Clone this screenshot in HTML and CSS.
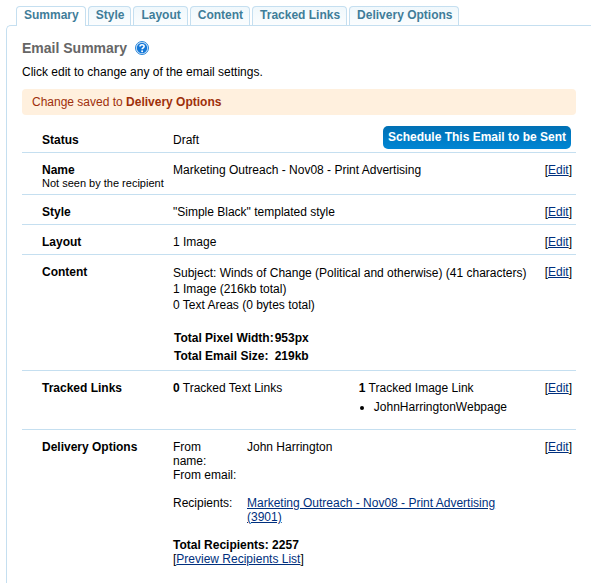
FILE: index.html
```html
<!DOCTYPE html>
<html lang="en">
<head>
    <meta charset="UTF-8">
    <meta name="viewport" content="width=device-width, initial-scale=1.0">
    <title>Email Summary</title>
    <link rel="stylesheet" href="styles.css">
</head>
<body>
    <nav class="tabs">
        <a href="#" class="tab active">Summary</a>
        <a href="#" class="tab">Style</a>
        <a href="#" class="tab">Layout</a>
        <a href="#" class="tab">Content</a>
        <a href="#" class="tab">Tracked Links</a>
        <a href="#" class="tab">Delivery Options</a>
    </nav>
    <div class="panel">
        <div class="title">
            <h1>Email Summary</h1>
            <a href="#" class="help" aria-label="Help">
                <svg width="14" height="14" viewBox="0 0 14 14">
                    <circle cx="7" cy="7" r="6.5" fill="#d5e8fa" stroke="#2a86d8" stroke-width="1"/>
                    <circle cx="7" cy="7" r="5.2" fill="#1478d8"/>
                    <path d="M5 5.6C5 3.2 9.1 3.2 9.1 5.5C9.1 6.9 7.1 6.8 7.1 8.3" fill="none" stroke="#fff" stroke-width="1.6"/>
                    <circle cx="7.1" cy="10.2" r="1" fill="#fff"/>
                </svg>
            </a>
        </div>
        <p class="intro">Click edit to change any of the email settings.</p>
        <div class="message">Change saved to <b>Delivery Options</b></div>

        <table class="summary">
            <tr class="status">
                <th scope="row">Status</th>
                <td>Draft</td>
                <td class="action"><button type="button" class="schedule-btn">Schedule This Email to be Sent</button></td>
            </tr>
        </table>
        <table class="summary">
            <tr>
                <th scope="row">Name<span class="note">Not seen by the recipient</span></th>
                <td>Marketing Outreach - Nov08 - Print Advertising</td>
                <td class="edit">[<a href="#">Edit</a>]</td>
            </tr>
            <tr>
                <th scope="row">Style</th>
                <td>"Simple Black" templated style</td>
                <td class="edit">[<a href="#">Edit</a>]</td>
            </tr>
            <tr>
                <th scope="row">Layout</th>
                <td>1 Image</td>
                <td class="edit">[<a href="#">Edit</a>]</td>
            </tr>
            <tr>
                <th scope="row">Content</th>
                <td>
                    <div class="details">
                        Subject: Winds of Change (Political and otherwise) (41 characters)<br>
                        1 Image (216kb total)<br>
                        0 Text Areas (0 bytes total)
                    </div>
                    <dl class="totals">
                        <dt>Total Pixel Width:</dt>
                        <dd>953px</dd>
                        <dt>Total Email Size:</dt>
                        <dd>219kb</dd>
                    </dl>
                </td>
                <td class="edit">[<a href="#">Edit</a>]</td>
            </tr>
            <tr class="tracked">
                <th scope="row">Tracked Links</th>
                <td>
                    <div class="links">
                        <div><b>0</b> Tracked Text Links</div>
                        <div>
                            <b>1</b> Tracked Image Link
                            <ul>
                                <li>JohnHarringtonWebpage</li>
                            </ul>
                        </div>
                    </div>
                </td>
                <td class="edit">[<a href="#">Edit</a>]</td>
            </tr>
            <tr class="last">
                <th scope="row">Delivery Options</th>
                <td>
                    <dl class="delivery">
                        <dt>From name:</dt>
                        <dd>John Harrington</dd>
                        <dt>From email:</dt>
                        <dd></dd>
                    </dl>
                    <dl class="delivery">
                        <dt>Recipients:</dt>
                        <dd><a href="#">Marketing Outreach - Nov08 - Print Advertising (3901)</a></dd>
                    </dl>
                    <b>Total Recipients: 2257</b><br>
                    [<a href="#">Preview Recipients List</a>]
                </td>
                <td class="edit">[<a href="#">Edit</a>]</td>
            </tr>
        </table>
    </div>
</body>
</html>
```

FILE: styles.css
```css
* {
    box-sizing: border-box;
}

body {
    font-family: "Liberation Sans", Arial, sans-serif;
    font-size: 12px;
    line-height: 14px;
    margin: 0;
    padding: 6px 0 0 6px;
    display: flex;
    flex-direction: column;
    min-height: 100vh;
    background-color: #fff;
    color: #000;
}

a {
    color: #002f7d;
}

/* Tabs */
.tabs {
    display: flex;
    gap: 2px;
    padding-left: 10px;
}

.tab {
    height: 19px;
    padding: 1px 6px 2px 7px;
    border: 1px solid #c5dff0;
    border-bottom: none;
    border-radius: 4px 4px 0 0;
    background: linear-gradient(to bottom, #f0f8fc, #fbfdfe);
    color: #3f7d99;
    font-weight: bold;
    text-decoration: none;
    white-space: nowrap;
}

.tab.active {
    height: 20px;
    margin-bottom: -1px;
    background: #fff;
    z-index: 1;
}

.panel {
    flex: 1;
    padding: 14px 15px 10px;
    border-top: 1px solid #c5dff0;
    border-left: 1px solid #c5dff0;
    border-top-left-radius: 5px;
}

.title {
    display: flex;
    align-items: center;
    gap: 8px;
    height: 16px;
}

.title h1 {
    margin: 0;
    font-size: 14px;
    color: #666;
}

.help {
    display: flex;
}

.intro {
    margin: 9px 0 10px;
}

.message {
    padding: 6px 10px;
    border-radius: 4px;
    background-color: #fff0de;
    color: #9e2f0a;
}

/* Summary rows */
.summary {
    width: 100%;
    border-spacing: 0;
}

.summary th,
.summary td {
    padding: 10px 0 5px;
    border-bottom: 1px solid #c5dff0;
    text-align: left;
    vertical-align: top;
}

.summary th {
    width: 151px;
    padding-left: 20px;
}

.summary .last th,
.summary .last td {
    border-bottom: none;
}

.summary .status th,
.summary .status td {
    padding-top: 18px;
}

.summary .status .action {
    padding: 11px 5px 3px 0;
    text-align: right;
}

.schedule-btn {
    padding: 4px 5px 5px;
    border: none;
    border-radius: 5px;
    background: linear-gradient(to bottom, #0070b4, #0086d4);
    color: #fff;
    font: bold 12px/14px "Liberation Sans", Arial, sans-serif;
    vertical-align: top;
    cursor: pointer;
}

.note {
    display: block;
    font-size: 11px;
    font-weight: normal;
    line-height: 12px;
    white-space: nowrap;
}

.summary .edit {
    width: 31px;
    padding-right: 4px;
    text-align: right;
    white-space: nowrap;
}

.details {
    line-height: 16px;
}

.totals {
    display: grid;
    grid-template-columns: max-content 1fr;
    column-gap: 1px;
    margin: 16px 0 0;
    padding-left: 1px;
    font-weight: bold;
    line-height: 18px;
}

.totals dd,
.delivery dd {
    margin: 0;
}

.links {
    display: grid;
    grid-template-columns: 1fr 1fr;
}

.links ul {
    margin: 5px 0 10px;
    padding-left: 15px;
}

.delivery {
    display: grid;
    grid-template-columns: 64px 1fr;
    column-gap: 10px;
    margin: 0 0 14px;
}

.delivery dd {
    max-width: 270px;
}
```
